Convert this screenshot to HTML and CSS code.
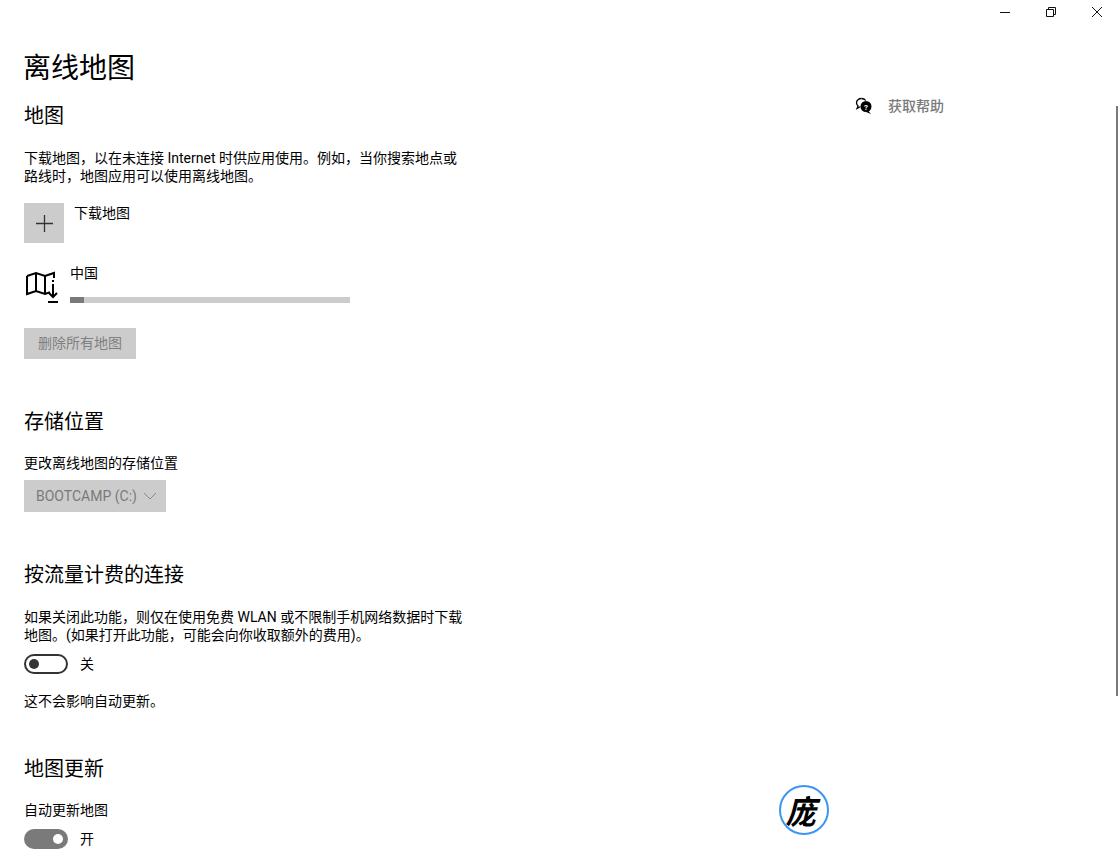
FILE: index.html
```html
<!DOCTYPE html>
<html lang="zh-CN">
<head>
<meta charset="utf-8">
<title>离线地图</title>
<link rel="stylesheet" href="styles.css">
</head>
<body>
<div class="window">
  <div class="titlebar">
    <button class="win-btn"><svg width="12" height="12" viewBox="0 0 12 12"><path d="M1 6.500h10" stroke="#111" fill="none"/></svg></button>
    <button class="win-btn"><svg width="12" height="12" viewBox="0 0 12 12"><path d="M1.500 3.500h7v7h-7zM3.500 3.500v-2h7v7h-2" stroke="#111" fill="none"/></svg></button>
    <button class="win-btn"><svg width="12" height="12" viewBox="0 0 12 12"><path d="M1 1l10 10M11 1L1 11" stroke="#111" fill="none"/></svg></button>
  </div>
  <div class="page">
    <main class="content">
      <h1 class="page-title">离线地图</h1>
      <section class="sec-map">
        <h2 class="sec-title">地图</h2>
        <p class="text desc">下载地图，以在未连接 Internet 时供应用使用。例如，当你搜索地点或路线时，地图应用可以使用离线地图。</p>
        <div class="add-row">
          <div class="add-tile"><svg width="17" height="17" viewBox="0 0 17 17"><path d="M8.500 0v17M0 8.500h17" stroke="#333" stroke-width="1.300" fill="none"/></svg></div>
          <span class="text add-label">下载地图</span>
        </div>
        <div class="map-row">
          <svg class="map-icon" width="34" height="36" viewBox="0 0 34 36"><path d="M3 9l9-3 9 3 9-3v5M3 9v18l9-3 9 3 5-1.700M12 6v18M21 9v18" stroke="#000" stroke-width="2" fill="none"/><path d="M29 13v2M29 17v13M25 26l4 4 4-4M24 35h10" stroke="#000" stroke-width="2" fill="none"/></svg>
          <div class="map-info">
            <span class="text">中国</span>
            <div class="progress"><div class="progress-fill"></div></div>
          </div>
        </div>
        <button class="btn-disabled">删除所有地图</button>
      </section>
      <section class="sec-storage">
        <h2 class="sec-title">存储位置</h2>
        <p class="text label">更改离线地图的存储位置</p>
        <div class="select"><span>BOOTCAMP (C:)</span><svg width="14" height="8" viewBox="0 0 14 8"><path d="M1 1l6 6 6-6" stroke="#8a8a8a" fill="none"/></svg></div>
      </section>
      <section class="sec-metered">
        <h2 class="sec-title">按流量计费的连接</h2>
        <p class="text desc wide">如果关闭此功能，则仅在使用免费 WLAN 或不限制手机网络数据时下载地图。(如果打开此功能，可能会向你收取额外的费用)。</p>
        <div class="toggle-row toggle-row-off"><span class="toggle off"><i></i></span><span class="text">关</span></div>
        <p class="text note">这不会影响自动更新。</p>
      </section>
      <section class="sec-update">
        <h2 class="sec-title">地图更新</h2>
        <p class="text label">自动更新地图</p>
        <div class="toggle-row"><span class="toggle on"><i></i></span><span class="text">开</span></div>
      </section>
    </main>
    <aside class="help">
      <svg width="18" height="18" viewBox="0 0 18 18"><path d="M6.500 1.500c-2.800 0-5 1.900-5 4.300 0 1.300.6 2.300 1.600 3.100L2 11.500l3.200-1.700" stroke="#000" stroke-width="1.300" fill="none"/><path d="M6.500 1.500c1.800 0 3.400.8 4.200 2" stroke="#000" stroke-width="1.300" fill="none"/><circle cx="11" cy="9.500" r="5.500" fill="#000"/><path d="M13 13.500l3 3.500-5-2z" fill="#000"/><text x="11" y="12.500" class="help-q">?</text></svg>
      <span class="help-label">获取帮助</span>
    </aside>
  </div>
  <div class="scrollbar"></div>
  <div class="badge"><span>庞</span></div>
</div>
</body>
</html>
```
FILE: styles.css
```css
* { box-sizing: border-box; }
html, body { margin: 0; height: 100%; overflow: hidden; background: #fff; }
body { font-family: Roboto, "Noto Sans CJK SC", sans-serif; color: #000; }
.window { position: relative; width: 1120px; height: 865px; overflow: hidden; }
.titlebar { display: flex; justify-content: flex-end; height: 23px; }
.win-btn { width: 46px; height: 23px; border: 0; background: none; padding: 0; display: flex; align-items: center; justify-content: center; }
.page { display: flex; padding-left: 24px; }
.content { width: 450px; flex: none; }
.page-title { margin: 26px 0 0 -1px; font-size: 28px; line-height: 40px; font-weight: 400; }
.sec-title { margin: 0; font-size: 20px; line-height: 28px; font-weight: 400; }
.text { font-size: 14px; line-height: 19px; margin: 0; }
.desc { margin-top: 19px; width: 442px; line-height: 18px; }
.desc.wide { width: 445px; margin-top: 19px; }
.sec-map { margin-top: 13px; }
.add-row { display: flex; margin-top: 18px; height: 40px; }
.add-tile { width: 40px; height: 40px; background: #ccc; display: flex; align-items: center; justify-content: center; }
.add-label { margin-left: 10px; line-height: 20px; }
.map-row { display: flex; margin-top: 21px; }
.map-icon { margin-right: 12px; margin-top: 3px; }
.map-info { display: flex; flex-direction: column; }
.progress { width: 280px; height: 6px; background: #ccc; margin-top: 14px; }
.progress-fill { width: 14px; height: 6px; background: #7a7a7a; }
.btn-disabled { display: block; margin-top: 25px; width: 112px; height: 31px; border: 0; padding: 0 0 3px; background: #ccc; color: #808080; font: inherit; font-size: 14px; }
.sec-storage { margin-top: 49px; }
.label { margin-top: 18px; }
.select { display: flex; align-items: center; justify-content: space-between; margin-top: 7px; width: 142px; height: 32px; padding: 0 9px 0 12px; background: #ccc; color: #7a7a7a; font-size: 14px; }
.sec-metered { margin-top: 49px; }
.toggle-row { display: flex; align-items: center; gap: 12px; margin-top: 9px; height: 20px; }
.toggle-row-off { margin-top: 10px; }
.toggle { display: flex; align-items: center; width: 44px; height: 20px; border-radius: 10px; padding: 0 5px; }
.toggle i { width: 10px; height: 10px; border-radius: 50%; display: block; }
.toggle.off { border: 2px solid #333; padding: 0 3px; }
.toggle.off i { background: #333; }
.toggle.on { background: #7a7a7a; justify-content: flex-end; }
.toggle.on i { background: #fff; }
.note { margin-top: 18px; }
.sec-update { margin-top: 44px; }
.help { display: flex; align-items: flex-start; margin: 74px 0 0 381px; height: 20px; }
.help svg { flex: none; }
.help-q { font-size: 8px; font-weight: 700; fill: #fff; text-anchor: middle; }
.help-label { margin-left: 15px; font-size: 14px; line-height: 19px; color: #7a7a7a; font-weight: 500; }
.scrollbar { position: absolute; left: 1116px; top: 106px; width: 2px; height: 590px; background: #7a7a7a; }
.badge { position: absolute; left: 779px; top: 785px; width: 50px; height: 50px; border: 2px solid #3a96f5; border-radius: 50%; display: flex; align-items: center; justify-content: center; background: #fff; }
.badge span { font-size: 30px; font-weight: 700; line-height: 1; transform: skewX(-14deg) scaleY(1.1); font-family: "Noto Sans CJK SC", sans-serif; }
```
